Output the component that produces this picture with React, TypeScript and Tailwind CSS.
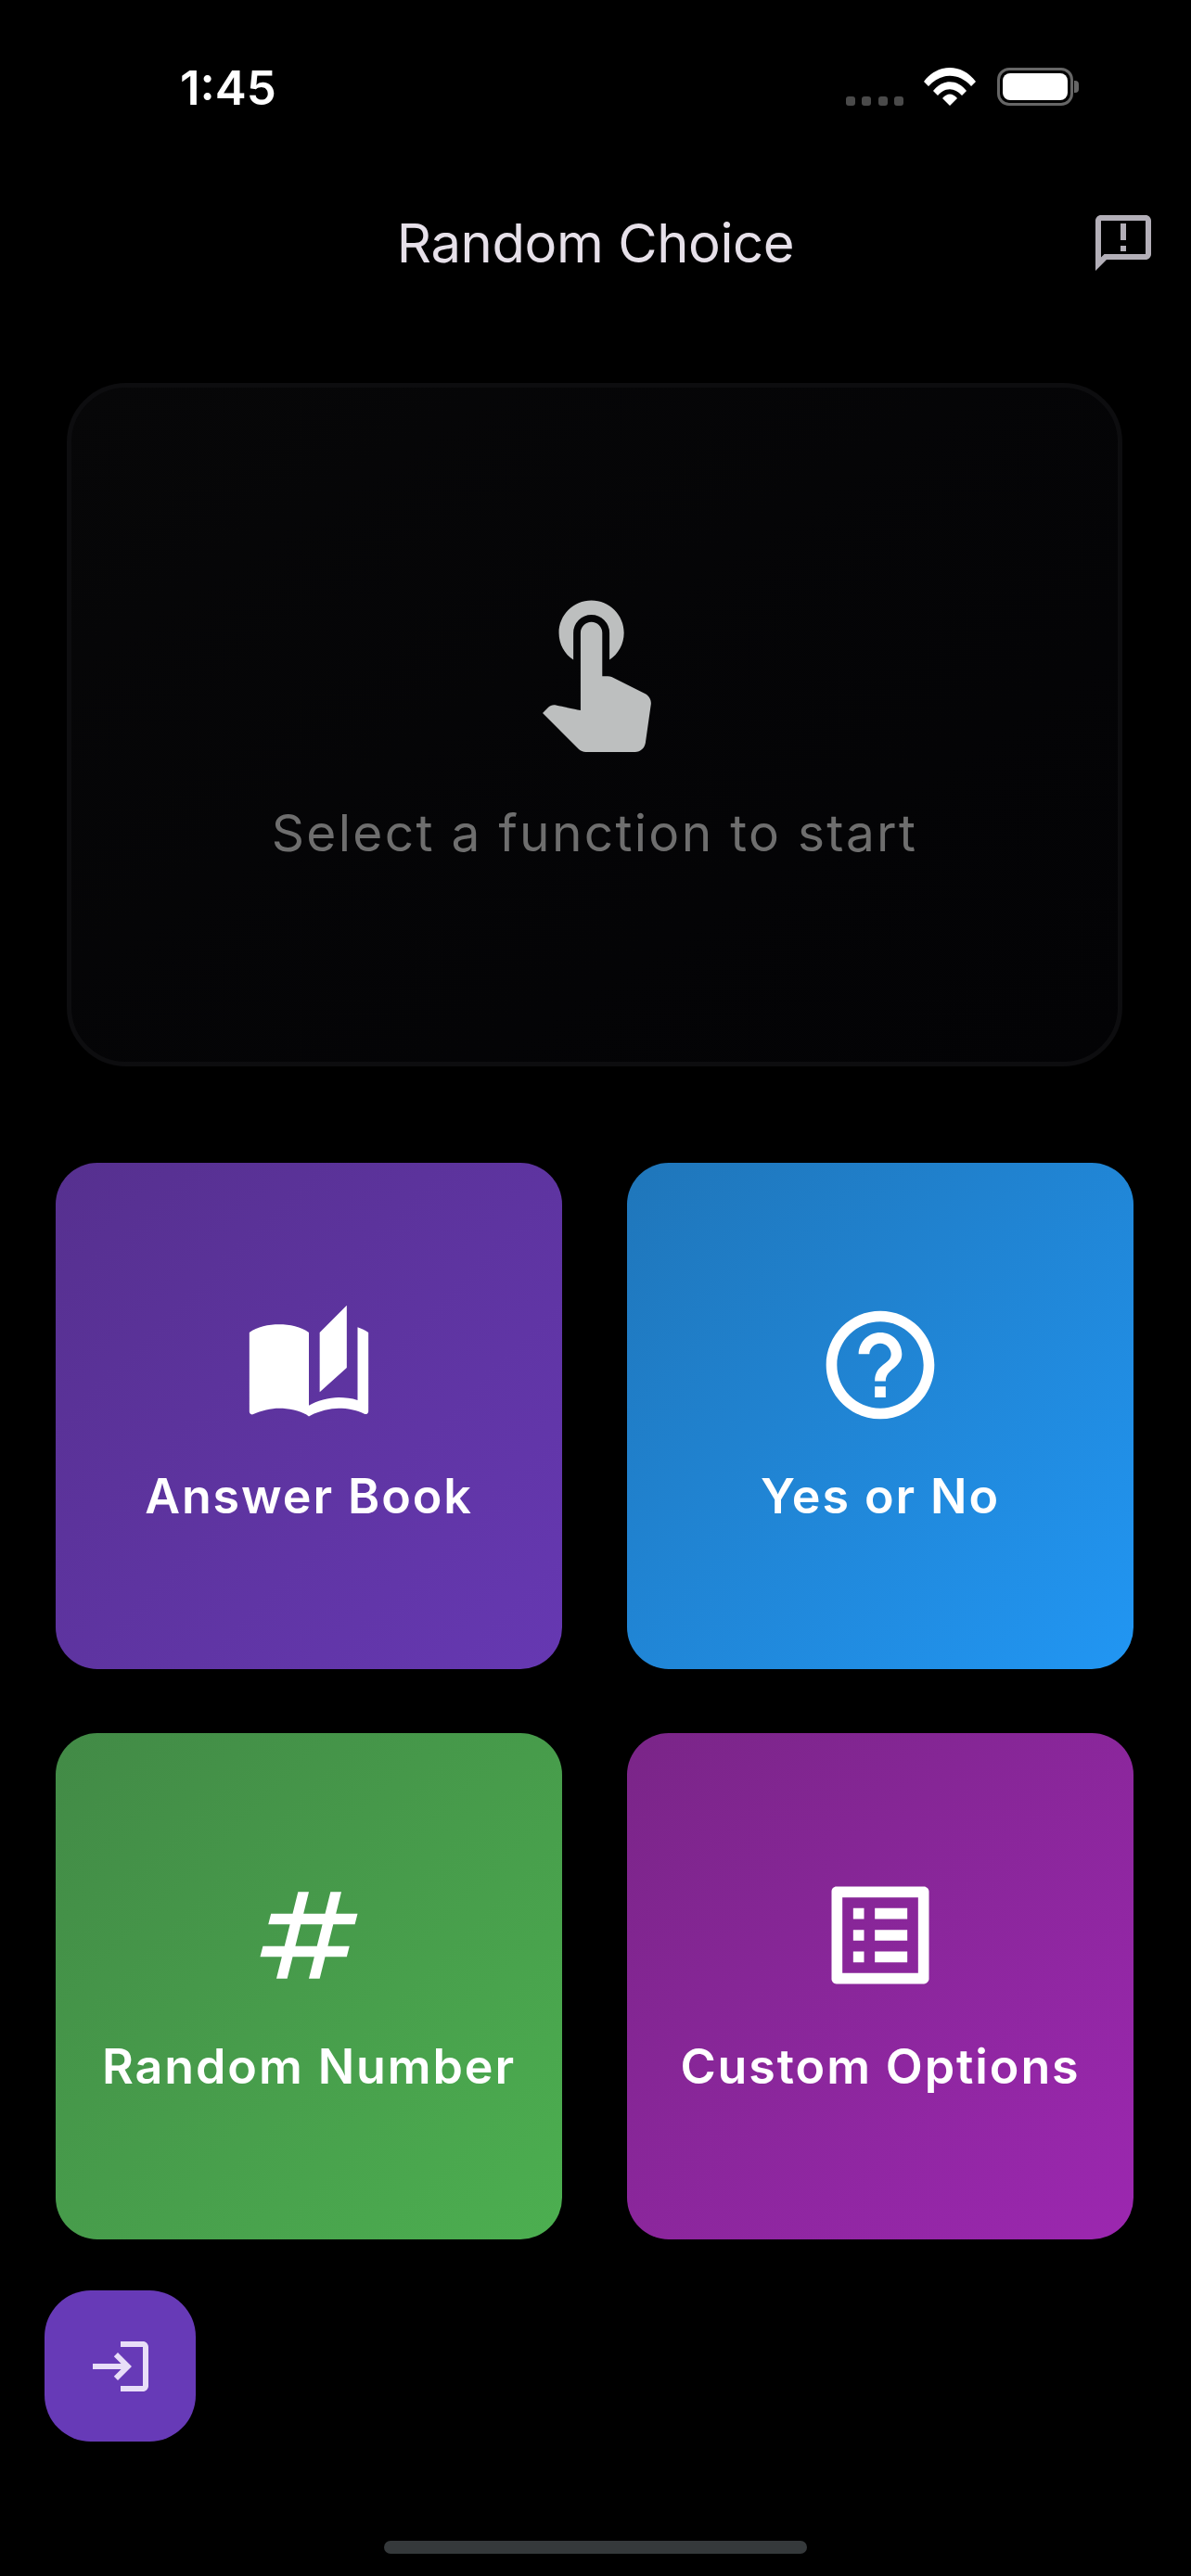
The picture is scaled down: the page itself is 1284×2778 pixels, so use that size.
import React from 'react';
import {
  MdTouchApp,
  MdAutoStories,
  MdHelpOutline,
  MdNumbers,
  MdListAlt,
  MdLogin,
  MdOutlineAnnouncement,
} from 'react-icons/md';

const tiles = [
  { label: 'Answer Book', Icon: MdAutoStories, bg: 'bg-gradient-to-br from-[#56308f] to-[#6638b2]' },
  { label: 'Yes or No', Icon: MdHelpOutline, bg: 'bg-gradient-to-br from-[#1f76ba] to-[#2196f3]' },
  { label: 'Random Number', Icon: MdNumbers, bg: 'bg-gradient-to-br from-[#428a46] to-[#4caf50]' },
  { label: 'Custom Options', Icon: MdListAlt, bg: 'bg-gradient-to-br from-[#7a2588] to-[#9c27b0]' },
];

function StatusIcons() {
  return (
    <div className="flex items-center">
      <div className="flex gap-[7.5px] mt-[30px] mr-[22px]">
        {[0, 1, 2, 3].map((i) => (
          <span key={i} className="w-[10px] h-[10px] rounded-[3px] bg-[#4a4a4a]" />
        ))}
      </div>
      <svg width="56" height="41" viewBox="0 0 56 41" className="mr-[23px]" fill="#fff">
        <path d="M0 15 C15 -5 41 -5 56 15 L51 20 C38 5 18 5 5 20 Z" />
        <path d="M10 25 C20 12 36 12 46 25 L41 30 C33 21 23 21 15 30 Z" />
        <path d="M20 33 C25 27 31 27 36 33 L28 41 Z" />
      </svg>
      <div className="flex items-center">
        <div className="w-[82px] h-[41px] rounded-[13px] border-[3px] border-[#666] p-[3px]">
          <div className="w-full h-full rounded-[8px] bg-white" />
        </div>
        <div className="w-[5px] h-[13px] ml-[1px] rounded-r-[4px] bg-[#666]" />
      </div>
    </div>
  );
}

export default function App() {
  return (
    <div
      className="w-[1284px] h-[2778px] bg-black flex flex-col overflow-hidden"
      style={{ fontFamily: 'Inter, "Noto Sans", sans-serif' }}
    >
      {/* status bar */}
      <div className="h-[190px] pl-[194px] pr-[121px] pt-[71px] flex justify-between items-start">
        <span className="text-[51px] leading-[48px] font-semibold text-white">1:45</span>
        <div className="mt-[2px]">
          <StatusIcons />
        </div>
      </div>

      {/* header */}
      <div className="h-[144px] grid grid-cols-[1fr_auto_1fr] items-center">
        <div />
        <h1 className="text-[58px] font-normal text-[#e6e0e9] tracking-[-0.4px]">Random Choice</h1>
        <div className="flex justify-end pr-[37px]">
          <MdOutlineAnnouncement size={72} color="#b3afb8" />
        </div>
      </div>

      {/* result card */}
      <div className="mt-[79px] ml-[72px] w-[1138px] h-[737px] rounded-[64px] border-[5px] border-[#0d0d0f] bg-gradient-to-br from-[#070708] to-[#030305] flex flex-col items-center justify-center">
        <MdTouchApp size={187} color="#bdbfbf" />
        <p className="mt-[46px] text-[55px] tracking-[2.3px] text-[#6e6e6e]">Select a function to start</p>
      </div>

      {/* function tiles */}
      <div className="mt-[104px] ml-[60px] grid grid-cols-[546px_546px] auto-rows-[546px] gap-x-[70px] gap-y-[69px]">
        {tiles.map(({ label, Icon, bg }) => (
          <div key={label} className={`${bg} rounded-[45px] flex flex-col items-center justify-center`}>
            <Icon size={140} color="#fff" />
            <span className="mt-[33px] text-[52px] font-semibold tracking-[1.9px] text-white">{label}</span>
          </div>
        ))}
      </div>

      {/* login button */}
      <div className="mt-[55px] ml-[48px] w-[163px] h-[163px] rounded-[50px] bg-[#673ab7] flex items-center justify-center">
        <MdLogin size={72} color="#e8def8" />
      </div>

      {/* home indicator */}
      <div className="mt-[107px] mx-auto w-[456px] h-[14px] rounded-full bg-[#35393b]" />
    </div>
  );
}
